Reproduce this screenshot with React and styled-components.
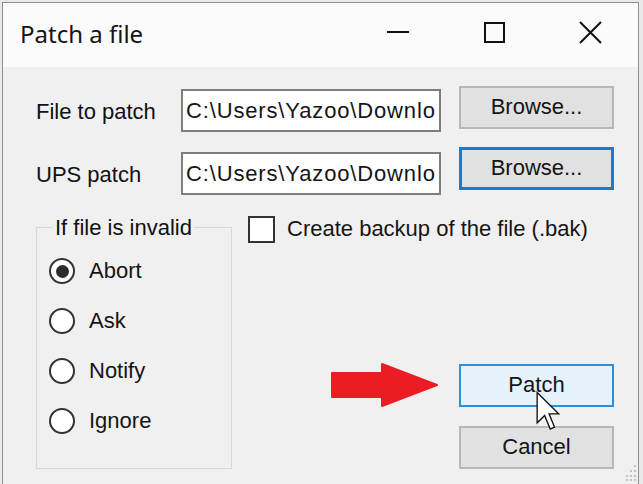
import React from 'react';
import styled, { createGlobalStyle } from 'styled-components';

const GlobalStyle = createGlobalStyle`
  html, body {
    margin: 0;
    padding: 0;
    background: #e9e9e9;
  }
  body {
    width: 643px;
    height: 484px;
    overflow: hidden;
    font-family: 'Liberation Sans', Arial, sans-serif;
  }
`;

const Window = styled.div`
  position: relative;
  margin: 2px 0 0 2px;
  width: 635px;
  height: 482px;
  border: 1px solid #8f8f8f;
  border-bottom: none;
  background: #f0f0f0;
  display: flex;
  flex-direction: column;
`;

const TitleBar = styled.div`
  height: 64px;
  background: #fbfbfb;
  display: flex;
  align-items: center;
`;

const Title = styled.div`
  flex: 1;
  padding: 0 0 4px 17px;
  font-family: 'Noto Sans', 'Open Sans', sans-serif;
  font-size: 24px;
  color: #141414;
`;

const Controls = styled.div`
  display: flex;
  height: 100%;
`;

const CtrlButton = styled.div`
  width: 96px;
  height: 100%;
  display: flex;
  align-items: center;
  justify-content: center;
  padding-bottom: 6px;
  box-sizing: border-box;
`;

const Body = styled.div`
  flex: 1;
  padding: 19px 24px 0 33px;
`;

const Form = styled.div`
  display: grid;
  grid-template-columns: 145px 260px 1fr;
  grid-template-rows: 46px 48px;
  row-gap: 15px;
`;

const Label = styled.div`
  align-self: end;
  margin-bottom: 9px;
  font-size: 22px;
  line-height: 22px;
  color: #111;
  white-space: nowrap;
`;

const TextBox = styled.input`
  align-self: end;
  width: 260px;
  height: 43px;
  box-sizing: border-box;
  margin: 0;
  padding: 0 0 0 3px;
  border: 2px solid #7d7d7d;
  background: #fff;
  font-family: 'Liberation Sans', Arial, sans-serif;
  font-size: 22px;
  letter-spacing: 0.85px;
  color: #151515;
  outline: none;
`;

const Button = styled.button`
  align-self: start;
  justify-self: end;
  width: 155px;
  height: 43px;
  box-sizing: border-box;
  margin: 0;
  padding: 0 0 2px;
  font-family: 'Liberation Sans', Arial, sans-serif;
  font-size: 22px;
  color: #141414;
  background: ${(p) => (p.$hover ? '#e5f1fb' : '#e1e1e1')};
  border: ${(p) =>
    p.$focus ? '3px solid #1a7acb' : p.$hover ? '2px solid #2f8fd6' : '2px solid #b7b7b7'};
`;

const Lower = styled.div`
  margin-top: 20px;
  height: 255px;
  display: flex;
`;

const GroupBox = styled.fieldset`
  width: 196px;
  height: 254px;
  box-sizing: border-box;
  margin: 0;
  padding: 0 0 0 11px;
  min-width: 0;
  border: 1px solid #d9d9d9;
`;

const Legend = styled.legend`
  margin-left: 5px;
  padding: 0 2px;
  font-size: 22px;
  line-height: 25px;
  color: #111;
`;

const RadioList = styled.div`
  padding: 18px 0 0 1px;
  display: flex;
  flex-direction: column;
  gap: 24px;
`;

const Option = styled.label`
  display: flex;
  align-items: center;
  gap: 14px;
  height: 26px;
  font-size: 22px;
  color: #151515;
`;

const RadioCircle = styled.span`
  width: 26px;
  height: 26px;
  box-sizing: border-box;
  border-radius: 50%;
  border: 2px solid #333;
  background: #fff;
  display: flex;
  align-items: center;
  justify-content: center;
  &::after {
    content: '';
    width: 13px;
    height: 13px;
    border-radius: 50%;
    background: #2b2b2b;
    display: ${(p) => (p.$checked ? 'block' : 'none')};
  }
`;

const RightArea = styled.div`
  flex: 1;
  margin-left: 16px;
  display: flex;
  flex-direction: column;
`;

const CheckRow = styled.label`
  display: flex;
  align-items: center;
  gap: 12px;
  height: 28px;
  font-size: 22px;
  color: #151515;
  white-space: nowrap;
`;

const CheckBox = styled.span`
  width: 27px;
  height: 27px;
  box-sizing: border-box;
  border: 2px solid #333;
  background: #fff;
`;

const Actions = styled.div`
  margin-top: auto;
  margin-bottom: 1px;
  align-self: flex-end;
  display: flex;
  flex-direction: column;
  gap: 19px;
`;

const Annotation = styled.svg`
  position: absolute;
  left: ${(p) => p.$x}px;
  top: ${(p) => p.$y}px;
  pointer-events: none;
`;

const radios = [
  { label: 'Abort', checked: true },
  { label: 'Ask' },
  { label: 'Notify' },
  { label: 'Ignore' },
];

const visiblePath = 'C:\\Users\\Yazoo\\Downlo';

export default function App() {
  return (
    <>
      <GlobalStyle />
      <Window>
        <TitleBar>
          <Title>Patch a file</Title>
          <Controls>
            <CtrlButton>
              <svg width="22" height="4" viewBox="0 0 22 4">
                <line x1="0" y1="2" x2="22" y2="2" stroke="#111" strokeWidth="2" />
              </svg>
            </CtrlButton>
            <CtrlButton>
              <svg width="21" height="21" viewBox="0 0 21 21">
                <rect x="1" y="1" width="19" height="19" fill="none" stroke="#111" strokeWidth="2" />
              </svg>
            </CtrlButton>
            <CtrlButton>
              <svg width="23" height="23" viewBox="0 0 23 23">
                <path d="M1 1 L22 22 M22 1 L1 22" stroke="#111" strokeWidth="2" />
              </svg>
            </CtrlButton>
          </Controls>
        </TitleBar>

        <Body>
          <Form>
            <Label>File to patch</Label>
            <TextBox readOnly value={visiblePath} />
            <Button>Browse...</Button>
            <Label>UPS patch</Label>
            <TextBox readOnly value={visiblePath} />
            <Button $focus>Browse...</Button>
          </Form>

          <Lower>
            <GroupBox>
              <Legend>If file is invalid</Legend>
              <RadioList>
                {radios.map((r) => (
                  <Option key={r.label}>
                    <RadioCircle $checked={r.checked} />
                    {r.label}
                  </Option>
                ))}
              </RadioList>
            </GroupBox>
            <RightArea>
              <CheckRow>
                <CheckBox />
                Create backup of the file (.bak)
              </CheckRow>
              <Actions>
                <Button $hover>Patch</Button>
                <Button>Cancel</Button>
              </Actions>
            </RightArea>
          </Lower>
        </Body>

        {/* red arrow annotation */}
        <Annotation $x={328} $y={360} width="108" height="44" viewBox="0 0 108 44">
          <path
            d="M1 10 L51 10 L51 1 L106 22 L51 43 L51 34 L1 34 Z"
            fill="#ec1c24"
            stroke="#ec1c24"
            strokeWidth="2"
            strokeLinejoin="round"
          />
        </Annotation>

        {/* mouse pointer */}
        <Annotation $x={533} $y={388} width="25" height="41" viewBox="0 0 13 21">
          <path
            d="M0.6 0.6 L0.6 16.4 L4.5 12.6 L7.4 19.6 L9.6 18.6 L6.8 11.7 L11.8 11.7 Z"
            fill="#fff"
            stroke="#111"
            strokeWidth="0.7"
            strokeLinejoin="miter"
          />
        </Annotation>

        {/* resize grip */}
        <Annotation $x={620} $y={461} width="14" height="18" viewBox="0 0 14 18">
          <g fill="#c4c4c4">
            <rect x="11" y="1" width="2" height="2" />
            <rect x="7" y="6" width="2" height="2" />
            <rect x="11" y="6" width="2" height="2" />
            <rect x="3" y="11" width="2" height="2" />
            <rect x="7" y="11" width="2" height="2" />
            <rect x="11" y="11" width="2" height="2" />
            <rect x="3" y="15" width="2" height="2" />
            <rect x="7" y="15" width="2" height="2" />
            <rect x="11" y="15" width="2" height="2" />
          </g>
        </Annotation>
      </Window>
    </>
  );
}
